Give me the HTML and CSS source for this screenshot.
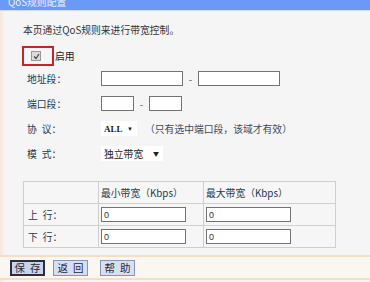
FILE: index.html
```html
<!DOCTYPE html>
<html lang="zh-CN">
<head>
    <meta charset="UTF-8">
    <title>QoS规则配置</title>
    <link rel="stylesheet" href="styles.css">
</head>
<body>
    <div class="titulo"><span>QoS规则配置</span></div>
    <div class="contenido">
        <p class="intro">本页通过QoS规则来进行带宽控制。</p>

        <div class="habilitar">
            <span class="marco">
                <span class="casilla">
                    <svg width="7" height="7" viewBox="0 0 7 7"><path d="M1 3.5 L3 5.5 L6 1" fill="none" stroke="#444" stroke-width="1.2"/></svg>
                </span>
            </span>
            <span>启用</span>
        </div>

        <div class="fila">
            <label>地址段：</label>
            <input type="text" class="ip">
            <span class="guion">-</span>
            <input type="text" class="ip">
        </div>
        <div class="fila">
            <label>端口段：</label>
            <input type="text" class="puerto">
            <span class="guion">-</span>
            <input type="text" class="puerto">
        </div>
        <div class="fila">
            <label>协&ensp;议：</label>
            <span class="selector sel-proto">ALL <i>&#9660;</i></span>
            <span class="nota">（只有选中端口段，该域才有效）</span>
        </div>
        <div class="fila">
            <label>模&ensp;式：</label>
            <span class="selector sel-modo">独立带宽 <i>&#9660;</i></span>
        </div>

        <table class="anchos">
            <tr>
                <th></th>
                <th>最小带宽（Kbps）</th>
                <th>最大带宽（Kbps）</th>
            </tr>
            <tr>
                <td>上&ensp;行：</td>
                <td><input type="text" class="ancho" value="0"></td>
                <td><input type="text" class="ancho" value="0"></td>
            </tr>
            <tr>
                <td>下&ensp;行：</td>
                <td><input type="text" class="ancho" value="0"></td>
                <td><input type="text" class="ancho" value="0"></td>
            </tr>
        </table>
    </div>

    <div class="botones">
        <button class="boton activo">保&ensp;存</button>
        <button class="boton">返&ensp;回</button>
        <button class="boton">帮&ensp;助</button>
    </div>
</body>
</html>
```

FILE: styles.css
```css
body {
    margin: 0;
    width: 370px;
    height: 282px;
    overflow: hidden;
    font-family: "Noto Sans CJK SC", "DejaVu Sans", sans-serif;
    font-size: 9.8px;
    color: #2b2b2b;
    background: linear-gradient(to right, #f7e6d2 0, #f5f4f2 4px, #f5f5f5 8px);
}

.titulo {
    height: 10px;
    overflow: hidden;
    background-color: #6a9af5;
    border-bottom: 1px solid #cfdcf5;
    color: #eef3ff;
    padding-left: 8px;
}

.titulo span {
    display: block;
    margin-top: -5px;
    line-height: 14px;
}

.contenido {
    padding-left: 23px;
}

.intro {
    margin: 0;
    padding-top: 12px;
    line-height: 14px;
    height: 14px;
    color: #333;
}

.habilitar {
    display: flex;
    align-items: center;
    margin-top: 9px;
    height: 20px;
    margin-left: -1px;
}

.marco {
    height: 16px;
    border: 2px solid #c4242a;
    display: flex;
    align-items: center;
    padding-left: 6px;
    box-sizing: content-box;
    width: 22px;
}

.casilla {
    width: 8px;
    height: 8px;
    border: 1px solid #9a9a9a;
    background-color: #dcdcdc;
    display: flex;
    align-items: center;
    justify-content: center;
}

.habilitar span:last-child {
    margin-left: 1px;
    color: #222;
}

.fila {
    display: flex;
    align-items: center;
    height: 25px;
    color: #25384f;
}

.fila label {
    width: 78px;
    padding-left: 4px;
    box-sizing: border-box;
}

input[type="text"] {
    height: 15px;
    box-sizing: border-box;
    border: 1px solid #737373;
    background-color: #fff;
    padding: 0 2px;
    font-family: "Liberation Sans", sans-serif;
    font-size: 9px;
    color: #333;
    margin: 0;
}

.ip {
    width: 82px;
}

.puerto {
    width: 33px;
}

.guion {
    width: 15px;
    text-align: center;
    color: #555;
}

.selector {
    display: inline-flex;
    align-items: center;
    justify-content: space-between;
    height: 15px;
    background-color: #fff;
    padding: 0 4px 0 3px;
    box-sizing: border-box;
    color: #222;
}

.selector i {
    font-style: normal;
    font-size: 6px;
}

.sel-proto {
    width: 36px;
    font-family: "Liberation Serif", serif;
    font-size: 9px;
    font-weight: bold;
}

.sel-modo {
    width: 62px;
}

.nota {
    margin-left: 8px;
    color: #3a4a5e;
}

.anchos {
    margin-top: 15px;
    width: 313px;
    border-collapse: collapse;
    border: 1px solid #c6c6c6;
    background-color: #f6f6f6;
}

.anchos th,
.anchos td {
    border: 1px solid #cfcfcf;
    height: 21px;
    padding: 0 2px;
    text-align: left;
    font-weight: normal;
    color: #25384f;
}

.anchos th:first-child,
.anchos td:first-child {
    width: 68px;
    padding-left: 4px;
}

.anchos th:nth-child(2) {
    width: 100px;
}

.ancho {
    width: 85px;
    height: 16px;
}

.botones {
    margin-top: 7px;
    border-top: 2px solid #f2dfc6;
    border-bottom: 2px solid #f2dfc6;
    background-color: #faf7f2;
    padding: 3px 0 2px 10px;
    display: flex;
    gap: 8px;
}

.boton {
    width: 35px;
    height: 16px;
    padding: 0;
    border: 1px solid #8496b8;
    background-color: #d7dff0;
    font-family: "Noto Sans CJK SC", sans-serif;
    font-size: 10.5px;
    color: #1e2a40;
    line-height: 14px;
    white-space: nowrap;
}

.boton:nth-child(3) {
    margin-left: 4px;
}

.activo {
    border: 2px solid #2a2f3a;
    background-color: #c9d3ea;
    line-height: 12px;
}
```
